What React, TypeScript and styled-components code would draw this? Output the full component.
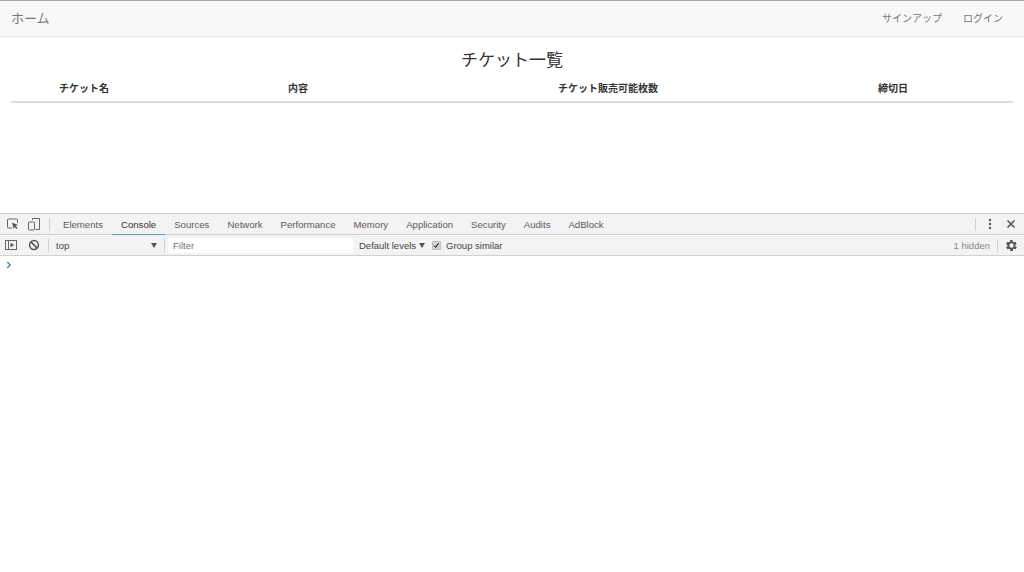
import React from 'react';
import styled, { createGlobalStyle } from 'styled-components';

const GlobalStyle = createGlobalStyle`
  html, body {
    margin: 0;
    padding: 0;
    background: #fff;
  }
  body {
    font-family: "Liberation Sans", "Noto Sans CJK JP", sans-serif;
  }
`;

const Page = styled.div`
  width: 1024px;
  height: 572px;
  overflow: hidden;
  display: flex;
  flex-direction: column;
`;

const Navbar = styled.nav`
  height: 35px;
  background: #f8f8f8;
  border-top: 1px solid #a8a8a8;
  border-bottom: 1px solid #e9e9e9;
  display: flex;
  align-items: center;
  justify-content: space-between;
  padding: 0 21px 0 11px;
  flex: none;
`;

const Brand = styled.a`
  font-size: 13px;
  color: #777;
  line-height: 33px;
`;

const NavLinks = styled.div`
  display: flex;
  gap: 21px;
`;

const NavLink = styled.a`
  font-size: 10px;
  color: #777;
  line-height: 34px;
`;

const Main = styled.main`
  height: 176px;
  flex: none;
  padding: 0 11px;
`;

const Title = styled.h1`
  margin: 0;
  padding-top: 12px;
  height: 32px;
  font-size: 17px;
  font-weight: 400;
  line-height: 23px;
  text-align: center;
  color: #333;
`;

const TableHead = styled.div`
  display: grid;
  grid-template-columns: 146px 282px 338px 232px;
  width: 1002px;
  height: 20px;
  border-bottom: 2px solid #ddd;
  align-items: center;
`;

const HeadCell = styled.div`
  font-size: 10px;
  font-weight: 700;
  line-height: 14px;
  text-align: center;
  color: #333;
  padding-bottom: 5px;
`;

const DevTools = styled.section`
  flex: 1;
  display: flex;
  flex-direction: column;
  color: #4a4a4a;
`;

const TabBar = styled.div`
  height: 20px;
  flex: none;
  background: #f3f3f3;
  border-top: 1px solid #d0d0d0;
  border-bottom: 1px solid #d0d0d0;
  display: flex;
  align-items: stretch;
  padding-left: 5px;
  font-size: 9.6px;
`;

const IconButton = styled.span<{ $ml?: number; $mr?: number }>`
  display: flex;
  align-items: center;
  justify-content: center;
  width: 16px;
  margin-left: ${p => p.$ml ?? 0}px;
  margin-right: ${p => p.$mr ?? 5}px;
  color: #5a5a5a;
`;

const Divider = styled.span`
  width: 1px;
  height: 13px;
  background: #d0d0d0;
  align-self: center;
  flex: none;
`;

const Tabs = styled.div`
  display: flex;
  margin-left: 4px;
`;

const Tab = styled.div<{ $active?: boolean }>`
  padding: 0 9px;
  line-height: 21px;
  height: 21px;
  box-sizing: border-box;
  white-space: nowrap;
  color: ${p => (p.$active ? '#333' : '#5a5a5a')};
  border-bottom: ${p => (p.$active ? '1px solid #5a9be6' : 'none')};
`;

const Spacer = styled.div`
  flex: 1;
`;

const ToolBar = styled.div`
  height: 20px;
  flex: none;
  background: #f3f3f3;
  border-bottom: 1px solid #d0d0d0;
  display: flex;
  align-items: center;
  padding-left: 3px;
  font-size: 9.5px;
`;

const ContextSelect = styled.div`
  width: 103px;
  margin: 0 5px 0 7px;
  display: flex;
  justify-content: space-between;
  align-items: center;
  color: #444;
  padding-right: 2px;
  box-sizing: border-box;
`;

const Arrow = styled.span`
  display: inline-block;
  width: 0;
  height: 0;
  border-left: 3px solid transparent;
  border-right: 3px solid transparent;
  border-top: 5px solid #555;
`;

const FilterBox = styled.div`
  width: 185px;
  height: 15px;
  margin-left: 3px;
  background: #fff;
  color: #757575;
  line-height: 16px;
  padding-left: 5px;
  box-sizing: border-box;
`;

const Levels = styled.div`
  display: flex;
  align-items: center;
  gap: 3px;
  margin-left: 6px;
  color: #444;
`;

const CheckBox = styled.span`
  width: 7px;
  height: 7px;
  margin-left: 4px;
  margin-right: 2px;
  background: #d4d4d4;
  border: 1px solid #bbb;
  border-radius: 1px;
  display: flex;
  align-items: center;
  justify-content: center;
`;

const Hidden = styled.span`
  color: #888;
  margin-right: 7px;
`;

const ConsoleBody = styled.div`
  flex: 1;
  background: #fff;
  padding: 5px 0 0 6px;

  svg {
    display: block;
  }
`;

const columns = ['チケット名', '内容', 'チケット販売可能枚数', '締切日'];
const tabs = ['Elements', 'Console', 'Sources', 'Network', 'Performance', 'Memory', 'Application', 'Security', 'Audits', 'AdBlock'];

export default function App() {
  return (
    <Page>
      <GlobalStyle />
      <Navbar>
        <Brand>ホーム</Brand>
        <NavLinks>
          <NavLink>サインアップ</NavLink>
          <NavLink>ログイン</NavLink>
        </NavLinks>
      </Navbar>
      <Main>
        <Title>チケット一覧</Title>
        <TableHead>
          {columns.map(c => (
            <HeadCell key={c}>{c}</HeadCell>
          ))}
        </TableHead>
      </Main>
      <DevTools>
        <TabBar>
          <IconButton>
            <svg width="14" height="14" viewBox="0 0 14 14" fill="none">
              <path d="M6 11H2.500a1 1 0 0 1-1-1V3a1 1 0 0 1 1-1h8a1 1 0 0 1 1 1v3" stroke="#666" strokeWidth="1" />
              <path d="M6 5.500l6 2.400-2.400 1 2 2.200-1 1-2-2.200-1 2.200z" fill="#555" />
            </svg>
          </IconButton>
          <IconButton $mr={7}>
            <svg width="14" height="14" viewBox="0 0 14 14" fill="none" stroke="#666">
              <path d="M5.500 3V1.500h7v11H8.500" />
              <rect x="1.500" y="5" width="6" height="8" rx="1" />
            </svg>
          </IconButton>
          <Divider />
          <Tabs>
            {tabs.map(t => (
              <Tab key={t} $active={t === 'Console'}>{t}</Tab>
            ))}
          </Tabs>
          <Spacer />
          <Divider />
          <IconButton $ml={6} $mr={5}>
            <svg width="4" height="12" viewBox="0 0 4 12" fill="#555">
              <circle cx="2" cy="2" r="1.200" />
              <circle cx="2" cy="6" r="1.200" />
              <circle cx="2" cy="10" r="1.200" />
            </svg>
          </IconButton>
          <IconButton>
            <svg width="10" height="10" viewBox="0 0 10 10" stroke="#555" strokeWidth="1.600">
              <path d="M1.500 1.500l7 7M8.500 1.500l-7 7" />
            </svg>
          </IconButton>
        </TabBar>
        <ToolBar>
          <IconButton $mr={3}>
            <svg width="14" height="12" viewBox="0 0 14 12" fill="none">
              <rect x="1.500" y="1.500" width="11" height="9" stroke="#666" />
              <path d="M4.500 1.500v9" stroke="#666" />
              <path d="M6.500 3.700l3.600 2.300-3.600 2.300z" fill="#555" />
            </svg>
          </IconButton>
          <IconButton $ml={4} $mr={6}>
            <svg width="12" height="12" viewBox="0 0 12 12" fill="none" stroke="#555" strokeWidth="1.500">
              <circle cx="6" cy="6" r="4.400" />
              <path d="M2.900 2.900l6.200 6.200" />
            </svg>
          </IconButton>
          <Divider />
          <ContextSelect>
            top
            <Arrow />
          </ContextSelect>
          <Divider />
          <FilterBox>Filter</FilterBox>
          <Levels>
            Default levels
            <Arrow />
            <CheckBox>
              <svg width="7" height="7" viewBox="0 0 7 7" fill="none" stroke="#333" strokeWidth="1.200">
                <path d="M1.200 3.600l1.500 1.600 3-3.800" />
              </svg>
            </CheckBox>
            Group similar
          </Levels>
          <Spacer />
          <Hidden>1 hidden</Hidden>
          <Divider />
          <IconButton $ml={5} $mr={5}>
            <svg width="15" height="15" viewBox="0 0 24 24" fill="#555">
              <path transform="translate(-1.400 0)" fillRule="evenodd" d="M19.400 13a7.500 7.500 0 0 0 0-2l2.100-1.600-2-3.500-2.500 1a7.600 7.600 0 0 0-1.700-1L15.400 3.300h-4l-.4 2.600a7.600 7.600 0 0 0-1.700 1l-2.500-1-2 3.500L6.900 11a7.500 7.500 0 0 0 0 2l-2.100 1.600 2 3.500 2.500-1c.5.400 1.100.700 1.700 1l.4 2.600h4l.4-2.600c.6-.3 1.200-.6 1.700-1l2.500 1 2-3.500zM13.400 15.500a3.500 3.500 0 1 1 0-7 3.500 3.500 0 0 1 0 7z" />
            </svg>
          </IconButton>
        </ToolBar>
        <ConsoleBody>
          <svg width="6" height="8" viewBox="0 0 6 8" fill="none" stroke="#3f7fe0" strokeWidth="1.400">
            <path d="M1.200 1l3 3-3 3" />
          </svg>
        </ConsoleBody>
      </DevTools>
    </Page>
  );
}
